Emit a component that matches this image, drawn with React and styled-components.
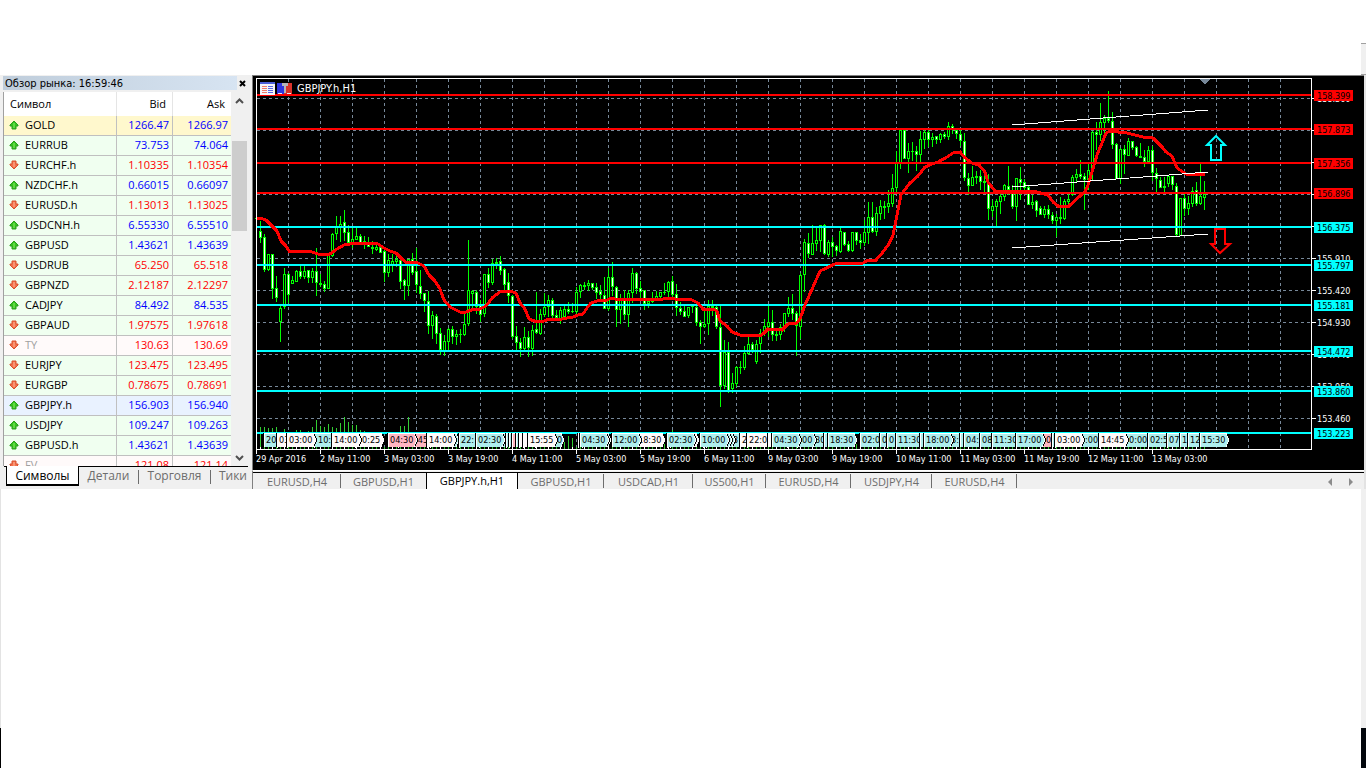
import React from "react";
import styled, { createGlobalStyle } from "styled-components";

const GlobalStyle = createGlobalStyle`
  *, *::before, *::after { box-sizing: border-box; }
  html, body { margin: 0; padding: 0; background: #fff; }
  body { overflow: hidden; }
  button { font: inherit; color: inherit; margin: 0; padding: 0; border: 0; background: none; cursor: pointer; }
`;

const UI_FONT = `"Open Sans", "Noto Sans", sans-serif`;
const CHART_FONT = `"DejaVu Sans Condensed", "DejaVu Sans", sans-serif`;

/* ---------- market watch data ---------- */
const QUOTES = [
  ["GOLD", "1266.47", "1266.97", "up", "gold"],
  ["EURRUB", "73.753", "74.064", "up"],
  ["EURCHF.h", "1.10335", "1.10354", "down"],
  ["NZDCHF.h", "0.66015", "0.66097", "up"],
  ["EURUSD.h", "1.13013", "1.13025", "down"],
  ["USDCNH.h", "6.55330", "6.55510", "up"],
  ["GBPUSD", "1.43621", "1.43639", "up"],
  ["USDRUB", "65.250", "65.518", "down"],
  ["GBPNZD", "2.12187", "2.12297", "down"],
  ["CADJPY", "84.492", "84.535", "up"],
  ["GBPAUD", "1.97575", "1.97618", "down"],
  ["TY", "130.63", "130.69", "down", "closed"],
  ["EURJPY", "123.475", "123.495", "down"],
  ["EURGBP", "0.78675", "0.78691", "down"],
  ["GBPJPY.h", "156.903", "156.940", "up", "selected"],
  ["USDJPY", "109.247", "109.263", "up"],
  ["GBPUSD.h", "1.43621", "1.43639", "up"],
  ["FV", "121.08", "121.14", "down", "closed"],
];

const ROW_COLORS = { gold: "#fff8cd", closed: "#fffafa", selected: "#e9f2ff", normal: "#f0fff0" };

/* ---------- chart data: high, low, body top, body bottom, bearish ---------- */
const CANDLES = [
  [203,232,218,219,0],[221,243,231,238,1],[234,272,237,270,1],[254,271,254,270,0],[254,299,254,289,1],
  [276,302,288,298,1],[305,342,308,322,0],[268,309,274,307,0],[273,303,274,295,1],[276,284,280,284,0],
  [270,282,271,282,0],[265,279,271,277,1],[265,279,271,277,0],[270,283,270,278,1],[268,283,271,278,0],
  [248,296,271,283,1],[274,287,283,285,1],[281,292,284,289,1],[253,289,253,289,0],[233,257,234,256,0],
  [216,240,226,234,0],[216,242,224,227,0],[210,241,222,233,1],[225,243,232,243,1],[227,248,239,244,0],
  [227,240,236,240,0],[234,245,236,243,1],[236,249,241,243,0],[237,247,243,247,1],[241,254,247,249,0],
  [243,251,247,250,0],[244,253,247,253,1],[250,282,251,273,1],[254,277,260,273,0],[254,272,261,265,0],
  [256,267,259,262,0],[256,289,260,282,1],[279,300,280,286,1],[259,296,259,286,0],[253,275,259,273,1],
  [248,293,271,285,1],[270,299,286,294,1],[293,312,293,301,1],[291,334,301,326,1],[311,339,315,326,0],
  [314,344,316,334,1],[328,355,333,350,1],[335,356,341,351,0],[328,351,329,342,0],[326,344,329,337,1],
  [330,345,334,337,0],[329,343,334,335,0],[314,336,324,335,0],[240,326,290,324,0],[290,309,291,294,0],
  [290,314,292,307,1],[300,322,305,315,1],[274,317,274,314,0],[268,288,274,283,1],[259,285,263,283,0],
  [258,269,262,264,0],[256,275,261,271,1],[268,290,269,285,1],[273,303,282,296,1],[295,339,296,337,1],
  [326,352,336,343,1],[338,357,342,349,1],[327,351,337,349,0],[331,357,337,348,1],[325,356,330,349,0],
  [292,334,329,333,1],[309,335,314,334,0],[293,317,307,315,0],[295,317,300,307,0],[298,318,300,316,1],
  [310,321,315,318,1],[307,324,310,320,0],[306,318,309,317,0],[302,314,309,312,1],[303,313,311,312,0],
  [287,314,292,312,0],[284,298,285,292,0],[282,290,285,287,0],[280,291,283,286,0],[283,290,283,288,1],
  [283,299,287,293,1],[285,300,291,295,1],[277,309,295,309,1],[268,311,277,309,0],[262,296,277,287,1],
  [286,327,287,310,1],[294,324,299,310,0],[290,320,300,315,1],[290,327,293,315,0],[268,303,273,293,0],
  [272,294,273,289,1],[281,300,288,292,1],[290,310,290,304,1],[298,308,301,304,0],[292,303,298,302,0],
  [291,300,296,299,0],[292,298,292,297,0],[283,295,292,293,0],[281,297,282,292,0],[276,297,281,295,1],
  [284,316,294,308,1],[302,315,308,312,1],[305,317,311,317,1],[307,318,307,316,0],[304,313,306,307,0],
  [305,326,307,323,1],[320,344,322,327,1],[310,328,324,327,0],[300,335,306,324,0],[300,316,306,308,1],
  [306,329,307,327,1],[306,407,327,386,1],[340,389,352,386,0],[342,393,352,391,1],[373,393,383,389,0],
  [366,387,367,384,0],[361,374,367,368,0],[346,370,353,368,0],[336,355,344,354,0],[342,353,344,350,1],
  [340,364,344,362,0],[329,353,333,344,0],[319,336,326,334,0],[305,337,322,327,0],[310,341,322,335,1],
  [328,341,334,336,0],[324,340,327,335,0],[313,332,313,327,0],[297,317,308,314,0],[294,320,308,314,1],
  [311,356,313,326,1],[273,339,275,327,0],[239,292,242,275,0],[233,258,243,254,1],[225,255,243,255,0],
  [228,251,240,244,0],[225,252,225,241,0],[224,255,225,254,1],[240,257,242,255,0],[237,257,242,247,1],
  [245,256,246,251,1],[227,253,231,252,0],[232,246,232,245,1],[241,252,244,251,1],[232,252,232,251,0],
  [232,245,232,241,1],[234,249,240,243,1],[220,246,232,243,0],[202,244,217,233,0],[202,233,217,232,1],
  [207,236,213,232,0],[200,220,206,214,0],[201,219,206,208,0],[190,213,203,207,0],[174,207,188,204,0],
  [151,192,162,188,0],[129,169,130,163,0],[129,159,130,159,1],[143,173,151,159,0],[142,161,151,152,0],
  [146,171,151,155,1],[131,162,139,155,0],[130,149,132,140,0],[130,147,132,140,1],[133,147,137,140,0],
  [136,144,136,140,1],[133,143,134,140,0],[132,139,134,137,1],[122,140,126,137,0],[124,134,126,130,1],
  [130,139,130,134,1],[130,146,134,141,1],[133,181,141,178,1],[173,195,178,186,1],[166,186,177,186,0],
  [171,184,176,178,0],[170,190,176,182,1],[176,192,181,183,1],[174,220,182,209,1],[200,217,206,211,0],
  [199,226,201,207,0],[194,214,196,202,0],[184,201,185,197,0],[166,195,186,190,1],[185,209,191,207,1],
  [178,221,178,207,0],[167,200,179,183,1],[179,192,182,188,1],[186,205,187,205,1],[195,209,202,205,0],
  [200,217,201,211,1],[206,215,208,215,1],[206,218,209,215,0],[205,219,209,215,1],[212,224,215,221,1],
  [214,237,217,221,0],[197,224,217,219,0],[199,220,201,219,0],[194,205,199,202,0],[175,196,177,195,0],
  [169,183,174,178,0],[160,179,174,177,1],[173,210,176,180,1],[164,190,170,180,0],[131,181,132,171,0],
  [122,150,132,135,1],[103,141,122,135,0],[115,133,118,123,0],[91,123,118,121,1],[112,149,121,145,1],
  [143,179,144,179,1],[148,184,149,179,0],[145,174,149,155,1],[138,156,141,156,0],[141,150,141,148,1],
  [146,157,147,156,1],[143,158,156,158,0],[150,167,157,162,1],[146,163,150,162,0],[146,181,150,173,1],
  [168,192,173,179,1],[177,188,180,188,1],[177,192,186,188,0],[175,187,176,184,0],[176,190,176,185,1],
  [183,236,186,235,1],[198,236,198,236,0],[194,216,198,209,1],[196,215,203,209,0],[187,207,191,204,0],
  [182,206,190,204,1],[164,205,196,204,0],[181,210,194,198,0],
];

const AVERAGE =
  "256,218 260,218 266,220 272,226 277,231 281,241 286,246 289,251 300,251 312,252 318,254 330,254 337,249 344,245 356,243 368,243 378,244 384,248 390,251 396,253 402,259 406,262 416,262 424,266 429,275 435,281 440,289 444,300 450,307 460,312 466,312 474,309 480,309 486,306 493,297 500,292 510,291 516,293 520,303 525,309 529,319 537,322 544,321 549,319 562,319 567,318 573,317 578,315 583,314 587,308 591,303 600,300 605,301 611,298 615,299 623,300 633,299 663,299 668,298 675,299 692,300 698,303 703,309 713,309 717,311 720,321 727,326 732,332 740,335 750,335 760,336 763,334 768,329 782,330 788,324 797,323 800,319 805,305 813,287 820,271 835,264 863,263 868,260 876,260 883,252 889,244 893,235 897,215 901,195 910,183 918,176 925,167 932,164 938,162 947,157 953,153 960,152 965,158 972,163 979,165 985,172 988,182 995,191 1010,191 1037,192 1048,195 1053,202 1058,206 1069,206 1080,196 1085,192 1088,185 1092,172 1097,155 1102,143 1106,133 1110,131 1127,133 1143,137 1153,138 1162,147 1166,152 1172,156 1177,168 1186,174 1205,175";

const LEVELS = [
  [95, "158.399", "#ff0000"], [129, "157.873", "#ff0000"], [163, "157.356", "#ff0000"], [193, "156.896", "#ff0000"],
  [227, "156.375", "#00ffff"], [265, "155.797", "#00ffff"], [305, "155.181", "#00ffff"],
  [351, "154.472", "#00ffff"], [391, "153.860", "#00ffff"], [433, "153.223", "#00ffff"],
];

/* scale marks that a level tag hides completely carry no caption */
const SCALE = [
  [98, "158.360"], [130], [162], [194], [226], [258, "155.910"], [290, "155.420"], [322, "154.930"],
  [354, "154.440"], [386, "153.950"], [418, "153.460"],
];

const DATES = [
  "29 Apr 2016", "2 May 11:00", "3 May 03:00", "3 May 19:00", "4 May 11:00", "5 May 03:00", "5 May 19:00", "6 May 11:00",
  "9 May 03:00", "9 May 19:00", "10 May 11:00", "11 May 03:00", "11 May 19:00", "12 May 11:00", "13 May 03:00",
];

const W = "#fffafa", C = "#afeeee", P = "#ffb6c1";
/* calendar event flags, back to front: x, width, caption, colour, caption x; width 0 is a whole flag with its tip */
const FLAGS = [
  [264, 13, "20", C], [277, 10, "03", W], [314, 18, "10:", C, 318], [287, 0, "03:00", W],
  [355, 0, "0:25", W, 362], [332, 0, "14:00", W], [398, 29, ":45", P, 415], [388, 0, "04:30", P],
  [430, 0, "", C], [427, 0, "14:00", W], [459, 17, "22:", C], [479, 0, "", C], [476, 0, "02:30", C],
  [506, 3, "", C], [509, 3, "", C], [512, 4, "", P], [516, 3, "", C], [519, 4, "", W], [523, 5, "", W],
  [535, 0, "0", C, 557], [528, 0, "15:55", W], [578, 2, "", W], [582, 0, "", C], [580, 0, "04:30", C],
  [636, 0, "18:30", W], [612, 0, "12:00", C], [670, 0, "", W], [667, 0, "02:30", C],
  [728, 11, "3", C, 733], [706, 0, "", C], [703, 0, "", C], [700, 0, "10:00", C], [740, 7, "2", W], [747, 21, "22:0", W],
  [797, 27, "30", C, 815], [787, 0, "00", C, 802], [768, 4, "", W], [772, 0, "04:30", C], [824, 4, "", C], [828, 0, "18:30", C],
  [860, 20, "02:0", C], [880, 7, "0", C], [887, 9, "0", C], [896, 24, "11:30", C], [920, 4, "", C],
  [936, 24, "8:", C, 951], [924, 0, "18:00", C], [960, 4, "", C], [964, 16, "04:", C], [980, 12, "08", C], [992, 24, "11:30", C],
  [1028, 24, "0", P, 1046], [1016, 0, "17:00", C], [1052, 3, "", C], [1076, 23, ":00", C, 1085], [1055, 0, "03:00", W],
  [1120, 28, "0:00", C, 1129], [1099, 0, "14:45", W],
  [1148, 19, "02:5", C], [1167, 13, "07", C], [1180, 8, "1", C], [1188, 12, "12", C], [1200, 0, "15:30", C],
];

const VOLUMES = [
  [260,427],[264,427],[268,428],[272,428],[276,427],[284,429],[296,430],[300,430],[308,431],[312,427],[316,420],[320,426],
  [324,427],[328,424],[332,427],[336,428],[340,423],[344,417],[348,422],[352,425],[356,425],[360,430],[364,431],
  [400,426],[404,426],[408,417],[564,438],[568,436],[572,438],[664,436],[672,430],[856,440],
];

const CHART_TABS = [
  ["EURUSD,H4", 88], ["GBPUSD,H1", 85], ["GBPJPY.h,H1", 92], ["GBPUSD,H1", 86], ["USDCAD,H1", 89],
  ["US500,H1", 73], ["EURUSD,H4", 85], ["USDJPY,H4", 81], ["EURUSD,H4", 85],
];
const ACTIVE_TAB = 2;

/* ---------- layout ---------- */
const Page = styled.div`
  display: flex;
  flex-direction: column;
  min-height: 100vh;
  background: #fff;
  font-family: ${UI_FONT};
`;
const TopSpace = styled.header`
  display: flex;
  flex-direction: column;
  align-items: flex-end;
  justify-content: flex-end;
  height: 75px;
`;
const TopEdge = styled.div`
  width: 5px;
  height: 32px;
  border-top: 1px solid #a0a0a0;
  border-bottom: 1px solid #a0a0a0;
  background: #f0f0f0;
`;
const Workspace = styled.main`
  display: flex;
  align-items: stretch;
  background: #f0f0f0;
`;
const BottomSpace = styled.footer`
  display: flex;
  flex: 1;
  flex-direction: column;
`;
const Blank = styled.div`
  flex: 1;
  border-left: 1px solid #e3e3e3;
  border-right: 5px solid #f0f0f0;
`;
const BottomStrip = styled.div`
  height: 40px;
  border-left: 1px solid #000;
  border-right: 5px solid #02060c;
`;

const Watch = styled.section`
  display: flex;
  flex-direction: column;
  flex: 0 0 252px;
  min-width: 0;
  height: 414px;
  padding: 1px 4px 0 3px;
  background: #f0f0f0;
`;
const WatchTitle = styled.div`
  display: flex;
  height: 16px;
  align-items: flex-start;
`;
const WatchHeading = styled.h2`
  flex: 1;
  height: 14px;
  margin: 0;
  padding-left: 2px;
  background: linear-gradient(90deg, #bfcddb, #d7e4f2);
  color: #000;
  font: 400 11px/15px ${CHART_FONT};
`;
const CloseButton = styled.button`
  display: grid;
  place-items: center;
  width: 11px;
  height: 15px;
`;
const WatchBody = styled.div`
  display: flex;
  height: 374px;
  overflow: hidden;
  border-left: 1px solid #a0a0a0;
`;
const QuoteTable = styled.table`
  flex: 1;
  height: max-content;
  border-collapse: separate;
  border-spacing: 0;
  table-layout: fixed;
  font-size: 11px;
  line-height: 18px;
`;
const HeadCell = styled.th`
  width: ${(p) => p.$width || "auto"};
  height: 24px;
  padding: 0 6px;
  border-right: ${(p) => (p.$last ? "0" : "1px solid #e5e5e5")};
  background: #fff;
  font-weight: 400;
  text-align: ${(p) => (p.$num ? "right" : "left")};
`;
const QuoteRow = styled.tr`
  height: 20px;
  background: ${(p) => ROW_COLORS[p.$kind || "normal"]};
`;
const SymbolCell = styled.td`
  padding: 0 0 1px 5px;
  border-right: 1px solid #c0c0c0;
  border-bottom: 1px solid #c0c0c0;
  color: ${(p) => (p.$closed ? "#a0a0a0" : "#000")};
  white-space: nowrap;
`;
const SymbolName = styled.span`
  display: inline-flex;
  align-items: center;
  gap: 6px;
  height: 18px;
  vertical-align: top;
`;
const PriceCell = styled.td`
  padding: 0 3px 1px 0;
  border-right: ${(p) => (p.$last ? "0" : "1px solid #c0c0c0")};
  border-bottom: 1px solid #c0c0c0;
  color: ${(p) => (p.$dir === "up" ? "#0000ff" : "#ff0000")};
  text-align: right;
`;
const ScrollBar = styled.div`
  display: flex;
  flex-direction: column;
  align-items: stretch;
  width: 17px;
  padding: 0 1px;
`;
const ScrollButton = styled.button`
  display: grid;
  place-items: center;
  height: 17px;
`;
const ScrollTrack = styled.div`
  flex: 1;
  padding-top: 32px;
`;
const ScrollThumb = styled.div`
  height: 90px;
  background: #cdcdcd;
`;
const WatchTabs = styled.nav`
  display: flex;
  height: 23px;
  min-width: 0;
  margin-left: 1px;
  padding-left: 2px;
  border-top: 1px solid #000;
`;
const WatchTab = styled.button`
  flex: none;
  width: ${(p) => p.$width};
  height: 20px;
  margin-top: -1px;
  border: ${(p) => (p.$active ? "solid #000" : "solid transparent")};
  border-width: 0 1px 2px;
  background: ${(p) => (p.$active ? "#fff" : "transparent")};
  color: ${(p) => (p.$active ? "#000" : "#6d6d6d")};
  font-size: 12px;
  line-height: 20px;
  text-align: ${(p) => p.$align || "center"};
`;
const TabRule = styled.span`
  flex: none;
  width: 1px;
  height: 14px;
  margin-top: 3px;
  background: #6d6d6d;
`;

const ChartPane = styled.section`
  display: flex;
  flex: 1;
  flex-direction: column;
  min-width: 0;
  border-right: 2px solid #e3e3e3;
`;
const ChartFrame = styled.div`
  border: solid #808080;
  border-width: 1px 0 0 1px;
  background: #000;
`;
const ChartSvg = styled.svg`
  display: block;
  width: 100%;
  height: auto;
  font-family: ${CHART_FONT};
  font-size: 9px;
`;
const ChartTitle = styled.text`
  font-size: 11px;
`;
const ChartTabs = styled.nav`
  display: flex;
  height: 19px;
  padding: 2px 0 0;
  border-top: 1px solid #fff;
  border-left: 1px solid #808080;
  background: linear-gradient(#000, #000) 0 1px / 100% 1px no-repeat #f0f0f0;
`;
const ChartTab = styled.button`
  flex: none;
  width: ${(p) => p.$width}px;
  height: 16px;
  border-style: solid;
  border-width: 0 1px;
  border-color: ${(p) => (p.$active ? "#000" : "transparent")};
  background: ${(p) => (p.$active ? "#fff" : "transparent")};
  color: ${(p) => (p.$active ? "#000" : "#6d6d6d")};
  font-size: 11px;
  line-height: ${(p) => (p.$active ? 16 : 18)}px;
  white-space: nowrap;
`;
const TabDivider = styled.span`
  flex: none;
  width: 1px;
  height: 14px;
  margin: 1px 0 0 -1px;
  background: #6d6d6d;
`;
const TabArrows = styled.div`
  display: flex;
  gap: 14px;
  margin-left: auto;
  padding: 1px 9px 0 0;
`;
const TabArrow = styled.button`
  display: grid;
  place-items: center;
  width: 8px;
  height: 16px;
`;

/* ---------- pieces ---------- */
function DirectionIcon({ dir }) {
  return dir === "up" ? (
    <svg width="10" height="10" viewBox="0 0 10 10" aria-label="up">
      <path d="M5 1 9 5v1H7v3H3V6H1V5z" fill="#35c41f" stroke="#2aa01c" />
      <path d="M5 3v5" stroke="#8cf06a" />
    </svg>
  ) : (
    <svg width="10" height="10" viewBox="0 0 10 10" aria-label="down">
      <path d="M5 9 1 5V4h2V1h4v3h2v1z" fill="#f2704a" stroke="#d9512f" />
      <path d="M5 2v5" stroke="#ffb89c" />
    </svg>
  );
}

function Flag({ x, width, label, color, labelX }) {
  const whole = width === 0;
  const body = whole ? 26 : width;
  return (
    <g>
      <path d={whole ? `M${x} 433h26l4 7-4 7h-26z` : `M${x} 433h${body}v14h-${body}z`} fill={color} />
      <rect x={x} y="433" width={body} height="1" fill="#fff" />
      <rect x={x} y="433" width="1" height="15" fill="#fff" />
      <rect x={x - 1} y="433" width="1" height="15" fill="#000" />
      {whole && <path d={`M${x + 26} 433l3 7-3 7`} fill="none" stroke="#fff" />}
      {whole && <path d={`M${x + 27} 434l3 6-3 6`} fill="none" stroke="#000" />}
      {label && <text x={labelX || x + 2} y="443" fill="#000">{label}</text>}
    </g>
  );
}

const range = (from, to, step) => {
  const out = [];
  for (let v = from; v <= to; v += step) out.push(v);
  return out;
};

function PriceChart() {
  return (
    <ChartSvg viewBox="253 76 1111 394" role="img" aria-label="GBPJPY.h,H1">
      <g shapeRendering="crispEdges">
        <g stroke="#778899" strokeDasharray="3 3">
          {range(288, 1311, 32).map((x) => <path key={x} d={`M${x + 0.5} 79V449`} />)}
          {range(98, 418, 32).map((y) => <path key={y} d={`M257 ${y + 0.5}H1311`} />)}
        </g>
        <g fill="#32cd32">
          {VOLUMES.map(([x, y]) => <rect key={x} x={x} y={y} width="1" height={449 - y} />)}
        </g>
        {CANDLES.map(([h, l, t, b, bear], i) => {
          const x = 256 + i * 4;
          return (
            <g key={x} fill="#00ff00">
              <rect x={x} y={h} width="1" height={l - h} />
              <rect x={x - 1} y={t} width="3" height={Math.max(1, b - t)} />
              {b - t > 2 && <rect x={x} y={t + 1} width="1" height={b - t - 2} fill={bear ? "#fff" : "#000"} />}
            </g>
          );
        })}
        {LEVELS.map(([y, , color]) => <rect key={y} x="257" y={y - 1} width="1054" height="2" fill={color} />)}
        <polyline points={AVERAGE} fill="none" stroke="#ff0000" strokeWidth="3" />
        <path d="M1012 125 1208 110M1012 187 1208 172M1012 248 1208 234" stroke="#fff" fill="none" />
        <path d="M1199 79h11l-5 5z" fill="#778899" />
      </g>
      <path d="M1216 136 1225 145h-4v15h-10v-15h-4z" fill="none" stroke="#00ffff" strokeWidth="2" />
      <path d="M1215 229h10v15h5l-10 9-9-9h4z" fill="none" stroke="#ff0000" strokeWidth="2" />

      <g shapeRendering="crispEdges">
        {FLAGS.map(([x, width, label, color, labelX], i) => (
          <Flag key={i} x={x} width={width} label={label} color={color} labelX={labelX} />
        ))}
        {CANDLES.map((_, i) => (
          <rect key={i} x={256 + i * 4} y="447" width="1" height="2" fill={i % 3 === 1 ? "#fff" : "#32cd32"} />
        ))}
        <path d="M256.500 78V449.500H1311.500V78.500H256" fill="none" stroke="#fff" />
        <g fill="#fff">
          {DATES.map((d, i) => <rect key={d} x={256 + i * 64} y="449" width="1" height="5" />)}
          {SCALE.map(([y]) => <rect key={y} x="1312" y={y} width="4" height="1" />)}
        </g>
      </g>

      <g fill="#fff">
        {DATES.map((d, i) => <text key={d} x={256 + i * 64} y="462">{d}</text>)}
        {SCALE.map(([y, s]) => s && <text key={s} x="1317" y={y + 4}>{s}</text>)}
        <ChartTitle x="297" y="92">GBPJPY.h,H1</ChartTitle>
      </g>
      {LEVELS.map(([y, price, color]) => (
        <g key={price}>
          <rect x="1314" y={y - 5} width="39" height="11" fill={color} />
          <text x="1317" y={y + 4} fill="#000">{price}</text>
        </g>
      ))}

      <g shapeRendering="crispEdges">
        <rect x="260" y="82" width="15" height="13" fill="#f4f4fa" />
        <rect x="260" y="82" width="15" height="2" fill="#4a5cd6" />
        <path d="M262 86.500h5M262 88.500h5M262 90.500h5M262 92.500h5" stroke="#f07a6a" />
        <path d="M268 86.500h5M268 88.500h5M268 90.500h5M268 92.500h5" stroke="#5a66e6" />
        <rect x="277" y="83" width="7" height="11" fill="#2f35e0" />
        <rect x="284" y="83" width="8" height="11" fill="#d8342c" />
        <path d="M282 83h6v3h-2v7h-2v-7h-2z" fill="#b4b4b8" />
        <path d="M278 93.500h4M287 93.500h4" stroke="#e8e8f4" />
      </g>
    </ChartSvg>
  );
}

function MarketWatch() {
  return (
    <Watch>
      <WatchTitle>
        <WatchHeading>Обзор рынка: 16:59:46</WatchHeading>
        <CloseButton aria-label="Закрыть">
          <svg width="7" height="7" viewBox="0 0 7 7"><path d="M1 1l5 5M6 1 1 6" stroke="#000" strokeWidth="2" /></svg>
        </CloseButton>
      </WatchTitle>
      <WatchBody>
        <QuoteTable>
          <thead>
            <tr>
              <HeadCell>Символ</HeadCell>
              <HeadCell $num $width="56px">Bid</HeadCell>
              <HeadCell $num $last $width="58px">Ask</HeadCell>
            </tr>
          </thead>
          <tbody>
            {QUOTES.map(([name, bid, ask, dir, kind]) => (
              <QuoteRow key={name} $kind={kind}>
                <SymbolCell $closed={kind === "closed"}>
                  <SymbolName><DirectionIcon dir={dir} />{name}</SymbolName>
                </SymbolCell>
                <PriceCell $dir={dir}>{bid}</PriceCell>
                <PriceCell $dir={dir} $last>{ask}</PriceCell>
              </QuoteRow>
            ))}
          </tbody>
        </QuoteTable>
        <ScrollBar>
          <ScrollButton aria-label="Вверх">
            <svg width="9" height="6" viewBox="0 0 9 6"><path d="M1 5l3.500-3.500L8 5" fill="none" stroke="#505050" strokeWidth="2" /></svg>
          </ScrollButton>
          <ScrollTrack><ScrollThumb /></ScrollTrack>
          <ScrollButton aria-label="Вниз">
            <svg width="9" height="6" viewBox="0 0 9 6"><path d="M1 1l3.500 3.500L8 1" fill="none" stroke="#505050" strokeWidth="2" /></svg>
          </ScrollButton>
        </ScrollBar>
      </WatchBody>
      <WatchTabs>
        <WatchTab $active $width="73px">Символы</WatchTab>
        <WatchTab $width="59px">Детали</WatchTab>
        <TabRule />
        <WatchTab $width="71px">Торговля</WatchTab>
        <TabRule />
        <WatchTab $width="37px" $align="right">Тики</WatchTab>
      </WatchTabs>
    </Watch>
  );
}

export default function App() {
  return (
    <Page>
      <GlobalStyle />
      <TopSpace><TopEdge /></TopSpace>
      <Workspace>
        <MarketWatch />
        <ChartPane>
          <ChartFrame><PriceChart /></ChartFrame>
          <ChartTabs>
            {CHART_TABS.map(([name, width], i) => (
              <React.Fragment key={i}>
                <ChartTab $active={i === ACTIVE_TAB} $width={width}>{name}</ChartTab>
                {i !== ACTIVE_TAB && i !== ACTIVE_TAB - 1 && <TabDivider />}
              </React.Fragment>
            ))}
            <TabArrows>
              <TabArrow aria-label="Назад"><svg width="5" height="8" viewBox="0 0 5 8"><path d="M5 0v8L1 4z" fill="#8c8c8c" /></svg></TabArrow>
              <TabArrow aria-label="Вперёд"><svg width="5" height="8" viewBox="0 0 5 8"><path d="M0 0v8l4-4z" fill="#8c8c8c" /></svg></TabArrow>
            </TabArrows>
          </ChartTabs>
        </ChartPane>
      </Workspace>
      <BottomSpace><Blank /><BottomStrip /></BottomSpace>
    </Page>
  );
}
